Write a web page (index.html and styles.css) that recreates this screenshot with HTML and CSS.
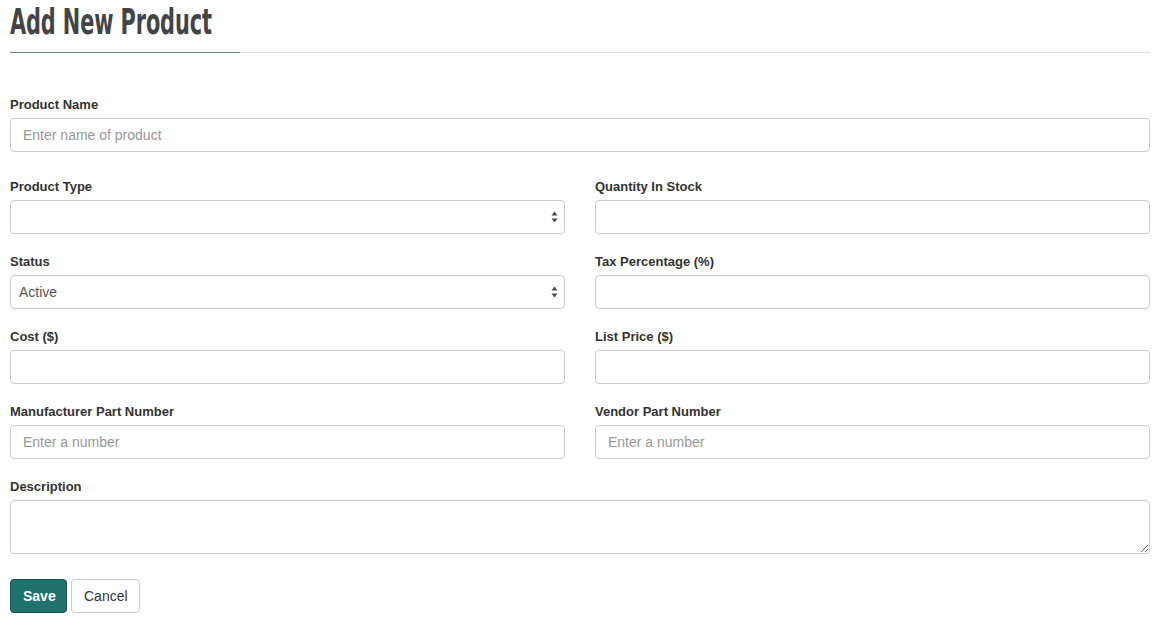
FILE: index.html
```html
<!DOCTYPE html>
<html>
<head>
<meta charset="utf-8">
<link rel="stylesheet" href="styles.css">
</head>
<body>
<div class="page">
  <div class="header">
    <h1 class="title">Add New Product</h1>
  </div>
  <form class="form">
    <div class="group first">
      <label class="label">Product Name</label>
      <input class="control" type="text" placeholder="Enter name of product">
    </div>
    <div class="grid">
      <div class="group">
        <label class="label">Product Type</label>
        <div class="select-wrap">
          <select class="control select"><option></option></select>
          <svg class="arrows" width="7" height="12" viewBox="0 0 7 12"><path d="M3.5 0.5 L6.5 4.5 L0.5 4.5 Z M0.5 7.5 L6.5 7.5 L3.5 11.5 Z" fill="#4a4a4a"/></svg>
        </div>
      </div>
      <div class="group">
        <label class="label">Quantity In Stock</label>
        <input class="control" type="text">
      </div>
      <div class="group">
        <label class="label">Status</label>
        <div class="select-wrap">
          <select class="control select"><option>Active</option></select>
          <svg class="arrows" width="7" height="12" viewBox="0 0 7 12"><path d="M3.5 0.5 L6.5 4.5 L0.5 4.5 Z M0.5 7.5 L6.5 7.5 L3.5 11.5 Z" fill="#4a4a4a"/></svg>
        </div>
      </div>
      <div class="group">
        <label class="label">Tax Percentage (%)</label>
        <input class="control" type="text">
      </div>
      <div class="group">
        <label class="label">Cost ($)</label>
        <input class="control" type="text">
      </div>
      <div class="group">
        <label class="label">List Price ($)</label>
        <input class="control" type="text">
      </div>
      <div class="group">
        <label class="label">Manufacturer Part Number</label>
        <input class="control" type="text" placeholder="Enter a number">
      </div>
      <div class="group">
        <label class="label">Vendor Part Number</label>
        <input class="control" type="text" placeholder="Enter a number">
      </div>
    </div>
    <div class="group desc">
      <label class="label">Description</label>
      <textarea class="control textarea"></textarea>
    </div>
    <div class="actions">
      <button type="button" class="btn btn-save">Save</button>
      <button type="button" class="btn btn-cancel">Cancel</button>
    </div>
  </form>
</div>
</body>
</html>
```

FILE: styles.css
```css
* { box-sizing: border-box; }
html, body { margin: 0; padding: 0; background: #fff; }
body {
  font-family: "Liberation Sans", Arial, Helvetica, sans-serif;
  font-size: 14px;
  color: #333;
}
.page { padding: 0 9px 0 10px; }
.header {
  position: relative;
  border-bottom: 1px solid #e4e4e4;
  padding-top: 2px;
  padding-bottom: 10px;
}
.header::after {
  content: "";
  position: absolute;
  left: 0;
  bottom: -1px;
  width: 230px;
  height: 1px;
  background: #6c7f93;
}
.title {
  margin: 0;
  font-family: "DejaVu Sans Condensed", "Liberation Sans", sans-serif;
  font-weight: bold;
  font-size: 36px;
  line-height: 40px;
  color: #444;
  display: inline-block;
  white-space: nowrap;
  transform-origin: left center;
  transform: scaleX(0.645);
  letter-spacing: -0.2px;
}
.form { padding-top: 42px; }
.group { margin-bottom: 18px; }
.group.first { margin-bottom: 25px; }
.grid {
  display: grid;
  grid-template-columns: 1fr 1fr;
  column-gap: 30px;
}
.label {
  display: block;
  font-weight: bold;
  font-size: 13px;
  line-height: 20px;
  margin-bottom: 3px;
  color: #333;
}
.control {
  display: block;
  width: 100%;
  height: 34px;
  padding: 6px 12px;
  font-family: "Liberation Sans", Arial, sans-serif;
  font-size: 14px;
  color: #555;
  background: #fff;
  border: 1px solid #ccc;
  border-radius: 4px;
  outline: none;
}
.control::placeholder { color: #999; }
.select-wrap { position: relative; }
.select {
  -webkit-appearance: none;
  appearance: none;
  padding: 6px 8px;
  color: #555;
}
.arrows {
  position: absolute;
  right: 7px;
  top: 11px;
  pointer-events: none;
}
.group.desc { margin-bottom: 25px; }
.textarea {
  height: 54px;
  resize: vertical;
}
.actions {
  display: flex;
  gap: 4px;
}
.btn {
  height: 34px;
  padding: 6px 12px;
  font-family: "Liberation Sans", Arial, sans-serif;
  font-size: 14px;
  border-radius: 4px;
  border: 1px solid #ccc;
  cursor: pointer;
}
.btn-save {
  background: #1e716d;
  border-color: #15524f;
  color: #fff;
  font-weight: bold;
  width: 57px;
}
.btn-cancel {
  background: #fff;
  color: #333;
  width: 69px;
}
```
